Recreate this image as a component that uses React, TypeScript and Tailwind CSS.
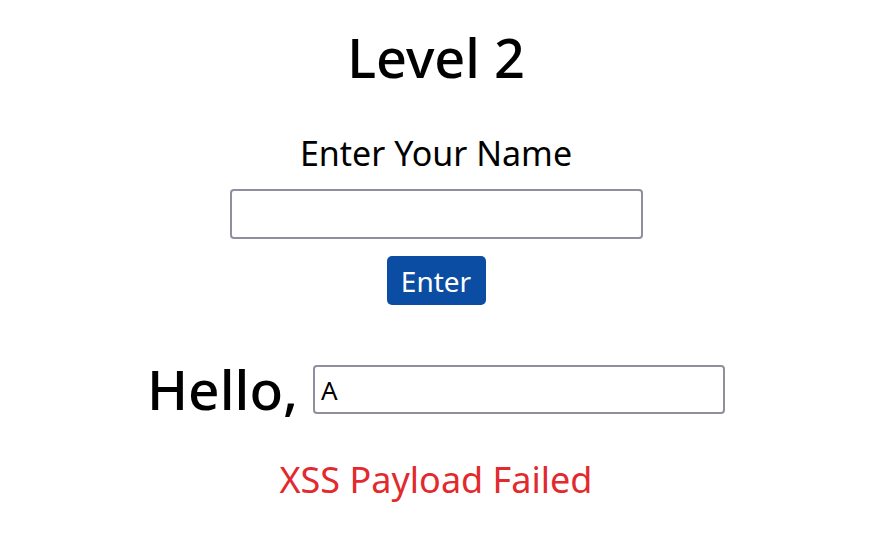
export default function App() {
  return (
    <div className="min-h-[538px] w-full bg-white flex flex-col items-center pr-2 font-['Noto_Sans',sans-serif] text-black">
      <h1 className="mt-[22px] text-[54px] leading-[70px] font-medium">Level 2</h1>
      <p className="mt-[41px] text-[34px] leading-[40px]">Enter Your Name</p>
      <input
        type="text"
        className="mt-[16px] w-[413px] h-[50px] border-2 border-[#8f8f9d] rounded-[4px] px-2 text-[24px]"
      />
      <button className="mt-[17px] w-[99px] h-[49px] bg-[#0b4da2] text-white text-[28px] rounded-[5px]">
        Enter
      </button>
      <div className="mt-[49px] flex items-center gap-[15px]">
        <span className="text-[55px] leading-[70px] font-medium">Hello,</span>
        <input
          type="text"
          defaultValue="A"
          className="w-[412px] h-[49px] border-2 border-[#8f8f9d] rounded-[4px] px-[6px] pt-[2px] text-[26px]"
        />
      </div>
      <p className="mt-[34px] text-[36px] leading-[44px] text-[#e22a2e]">XSS Payload Failed</p>
    </div>
  );
}
